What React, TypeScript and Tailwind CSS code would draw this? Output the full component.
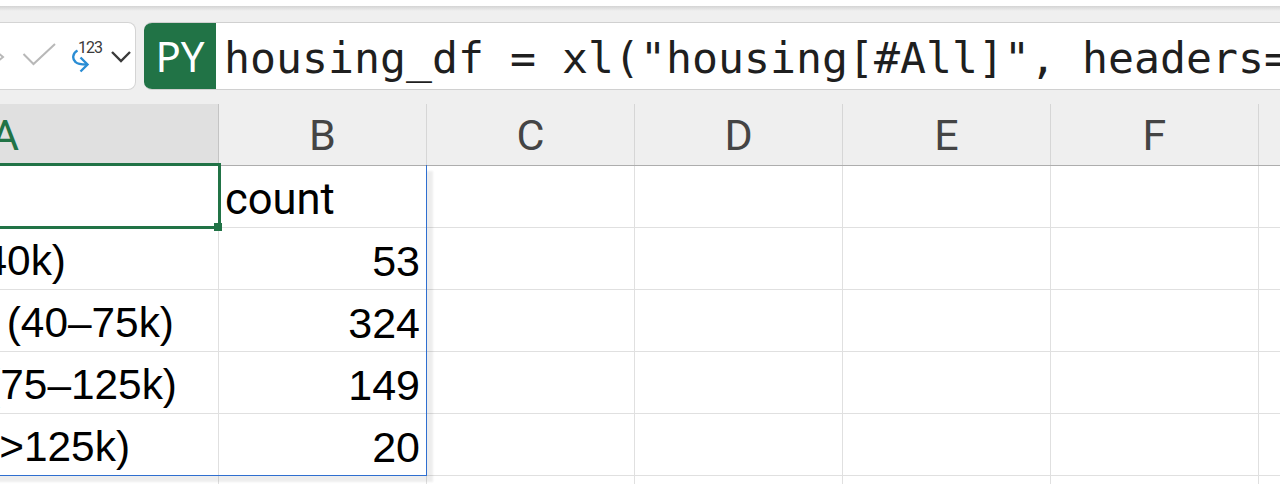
const cols = ["B", "C", "D", "E", "F", ""];
const rows = [
  { a: "Low (<40k)", pr: "pr-[152px]", b: "53" },
  { a: "Middle (40–75k)", pr: "pr-[44px]", b: "324" },
  { a: "Upper (75–125k)", pr: "pr-[41px]", b: "149" },
  { a: "High (>125k)", pr: "pr-[88px]", b: "20" },
];

function Icons() {
  return (
    <div className="flex items-center h-full">
      <svg width="8" height="24" viewBox="0 0 8 24" className="shrink-0">
        <path d="M-9 3 L3 13 L-9 23" stroke="#b8b8b8" strokeWidth="2" fill="none" />
      </svg>
      <svg width="36" height="26" viewBox="0 0 36 26" className="ml-[14px] shrink-0">
        <path d="M1.5 11 L11.5 21 L33 1" stroke="#b8b8b8" strokeWidth="2" fill="none" />
      </svg>
      <div className="relative w-[34px] h-[36px] ml-[14px] shrink-0">
        <svg width="20" height="26" viewBox="0 0 20 26" className="absolute left-0 top-[11px]">
          <path d="M5.5 1.5 C0.5 4 0 10 3.5 13 C6 15.5 10 15.5 14.5 15.5" stroke="#2a8dd4" strokeWidth="2.4" fill="none" />
          <path d="M8.5 8.5 L15.5 15.5 L8.5 22.5" stroke="#2a8dd4" strokeWidth="2.4" fill="none" />
        </svg>
        <span className="absolute left-[6px] top-[0px] text-[16px] leading-5 tracking-[-1px] text-[#3a3a3a] font-['Roboto',sans-serif]">123</span>
      </div>
      <svg width="22" height="16" viewBox="0 0 22 16" className="ml-[4px] shrink-0">
        <path d="M2 4 L11 13 L20 4" stroke="#3a3a3a" strokeWidth="2.4" fill="none" />
      </svg>
    </div>
  );
}

export default function App() {
  return (
    <div className="w-[1280px] h-[484px] overflow-hidden bg-[#efefef] flex flex-col">
      <div className="h-[6px] bg-white shrink-0" />
      <div className="h-[5px] shrink-0 bg-gradient-to-b from-[#d4d4d4] to-[#efefef]" />
      <div className="flex items-stretch h-[68px] mt-[11px] shrink-0 gap-[8px]">
        <div className="w-[136px] shrink-0 bg-white border border-[#d4d4d4] border-l-0 rounded-r-[8px] flex items-center">
          <Icons />
        </div>
        <div className="flex-1 min-w-0 flex items-stretch bg-white border-y border-[#d0d0d0] rounded-l-[8px] overflow-hidden">
          <div className="w-[72px] shrink-0 bg-[#217346] text-white text-[42px] leading-none flex items-center justify-center font-['Noto_Sans',sans-serif]">
            PY
          </div>
          <div className="pl-[8px] pt-[5px] flex items-center text-[#1f1f1f] text-[43.2px] whitespace-pre font-['DejaVu_Sans_Mono',monospace]">
            {'housing_df = xl("housing[#All]", headers='}
          </div>
        </div>
      </div>

      <div className="relative flex-1 ml-[-208px] mt-[14px] font-['Liberation_Sans',sans-serif] text-black text-[43px] leading-none">
        <div className="flex h-[62px] border-b border-[#adadad]">
          <div className="w-[427px] shrink-0 bg-[#e0e0e0] border-r border-[#c4c4c4] flex items-center justify-center pt-[2px] text-[#217346] text-[43px] font-['Roboto',sans-serif]">
            A
          </div>
          {cols.map((c, i) => (
            <div key={i} className="w-[208px] shrink-0 border-r border-[#d6d6d6] flex items-center justify-center pt-[2px] text-[#444444] text-[43px] font-['Roboto',sans-serif]">
              {c}
            </div>
          ))}
        </div>

        <div className="flex h-[62px] bg-white border-b border-[#e0e0e0]">
          <div className="w-[427px] shrink-0 border-r border-[#e0e0e0]" />
          <div className="w-[208px] shrink-0 border-r border-[#e0e0e0] flex items-center pl-[6px] pt-[7px] text-[43.5px] font-['Roboto',sans-serif]">
            count
          </div>
          {cols.slice(1).map((c, i) => (
            <div key={i} className="w-[208px] shrink-0 border-r border-[#e0e0e0]" />
          ))}
        </div>

        {rows.map((r) => (
          <div key={r.b} className="flex h-[62px] bg-white border-b border-[#e0e0e0]">
            <div className={`w-[427px] shrink-0 border-r border-[#e0e0e0] flex items-center justify-end pt-[6px] text-[42.4px] whitespace-nowrap ${r.pr}`}>
              {r.a}
            </div>
            <div className="w-[208px] shrink-0 border-r border-[#e0e0e0] flex items-center justify-end pt-[6px] pr-[6px]">
              {r.b}
            </div>
            {cols.slice(1).map((c, i) => (
              <div key={i} className="w-[208px] shrink-0 border-r border-[#e0e0e0]" />
            ))}
          </div>
        ))}
        <div className="flex h-[20px] bg-white">
          <div className="w-[427px] shrink-0 border-r border-[#e0e0e0]" />
          {cols.map((c, i) => (
            <div key={i} className="w-[208px] shrink-0 border-r border-[#e0e0e0]" />
          ))}
        </div>

        <div className="absolute left-[200px] top-[59px] w-[229px] h-[66px] border-[3px] border-l-0 border-[#217346] pointer-events-none" />
        <div className="absolute left-[422px] top-[119px] w-[8px] h-[8px] bg-[#217346] pointer-events-none" />
        <div className="absolute left-0 top-[61px] w-[635px] h-[311px] border-r border-b border-[#2f6fd0] shadow-[6px_6px_2px_rgba(0,0,0,0.07)] pointer-events-none" />
      </div>
    </div>
  );
}
